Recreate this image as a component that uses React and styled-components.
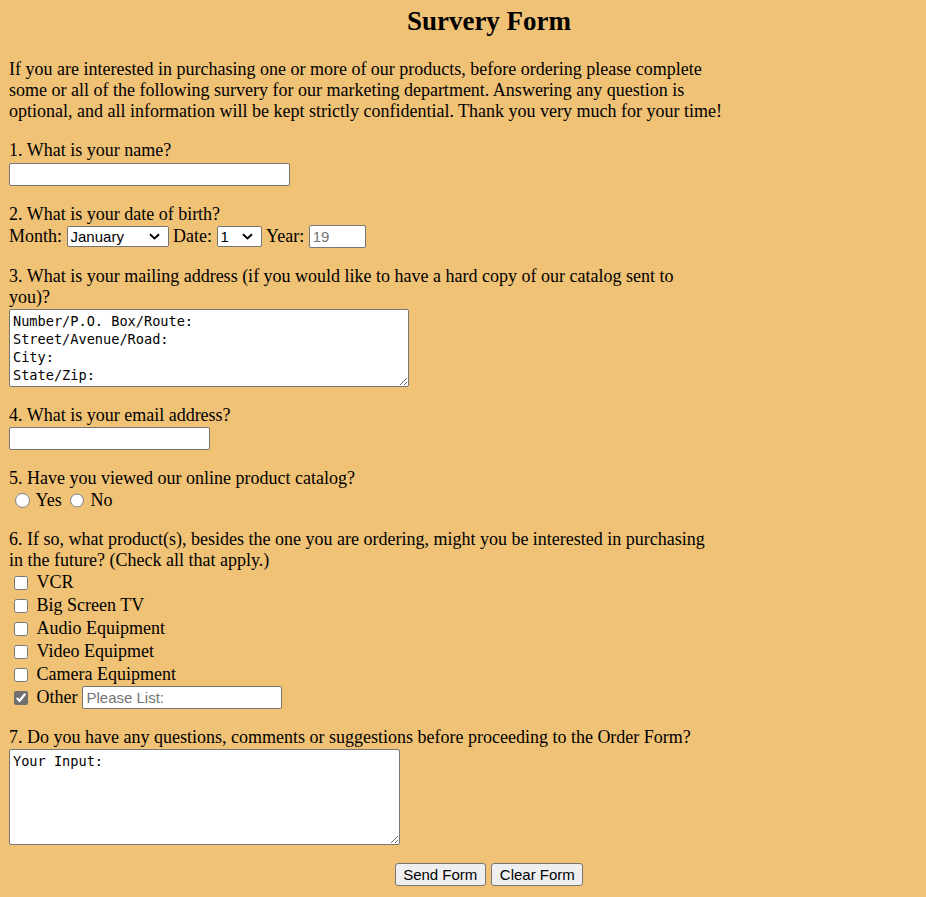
import React from 'react';
import styled, { createGlobalStyle } from 'styled-components';

const GlobalStyle = createGlobalStyle`
  html, body {
    margin: 0;
    padding: 0;
    background: #f0c276;
  }
  body {
    font-family: "Liberation Serif", "Times New Roman", serif;
    color: #000;
  }
`;

const Page = styled.form`
  padding: 6px 9px 0;
  font-size: 18px;
  line-height: normal;
`;

const Title = styled.h2`
  margin: 0 0 22px;
  padding-left: 52px;
  font-size: 27px;
  font-weight: bold;
  text-align: center;
`;

const Section = styled.div`
  max-width: 713px;
  margin: 18px 0;
`;

const Intro = styled.p`
  max-width: 713px;
  margin: 18px 0;
`;

const Label = styled.div``;

const TextField = styled.input`
  display: block;
  box-sizing: border-box;
  width: ${(p) => p.$w}px;
  height: 23px;
  margin: ${(p) => (p.$inline ? '0' : '1.5px 0 0')};
  padding: 1px 3px;
  border: 1px solid #767676;
  border-radius: 2px;
  background: #fff;
  color: #000;
  font: 15px "Liberation Sans", Arial, sans-serif;
  &::placeholder {
    color: #757575;
  }
`;

const Row = styled.div`
  display: flex;
  align-items: center;
  gap: 4.5px;
  height: 22px;
  margin-top: 1.3px;
`;

const SelectWrap = styled.span`
  position: relative;
  display: inline-flex;
`;

const Select = styled.select`
  appearance: none;
  box-sizing: border-box;
  width: ${(p) => p.$w}px;
  height: 21px;
  margin: 0;
  padding: 0 0 0 3px;
  border: 1px solid #767676;
  border-radius: 2px;
  background: #fff;
  color: #000;
  font: 15px "Liberation Sans", Arial, sans-serif;
`;

const Chevron = styled.svg`
  position: absolute;
  right: 9px;
  top: 7px;
  width: 11px;
  height: 7px;
  pointer-events: none;
`;

const Area = styled.textarea`
  display: block;
  box-sizing: border-box;
  width: ${(p) => p.$w}px;
  height: ${(p) => p.$h}px;
  margin: 1px 0 0;
  padding: 2px 3px;
  border: 1px solid #767676;
  border-radius: 2px;
  background: #fff;
  color: #000;
  font: 13.6px "DejaVu Sans Mono", monospace;
  line-height: 18px;
`;

const RadioRow = styled.div`
  display: flex;
  align-items: center;
  height: 22px;
`;

const Radio = styled.input`
  width: 14.6px;
  height: 14.6px;
  margin: 0 6px 0 6px;
`;

const ChoiceText = styled.span`
  margin-right: ${(p) => p.$mr || 0}px;
`;

const CheckRow = styled.label`
  display: flex;
  align-items: center;
  height: 23px;
`;

const Check = styled.input`
  width: 13.5px;
  height: 13.5px;
  margin: 0 9px 0 5px;
  accent-color: #6f6f6f;
`;

const ButtonRow = styled.div`
  display: flex;
  justify-content: center;
  gap: 5.5px;
  margin: 18px 0 0;
  padding-left: 52px;
`;

const Button = styled.button`
  box-sizing: border-box;
  height: 23px;
  padding: 0 7.5px;
  border: 1px solid #767676;
  border-radius: 3px;
  background: #efefef;
  color: #000;
  font: 15px "Liberation Sans", Arial, sans-serif;
`;

const months = [
  'January', 'February', 'March', 'April', 'May', 'June',
  'July', 'August', 'September', 'October', 'November', 'December',
];

const products = ['VCR', 'Big Screen TV', 'Audio Equipment', 'Video Equipmet', 'Camera Equipment'];

function Dropdown({ width, defaultValue, children }) {
  return (
    <SelectWrap>
      <Select $w={width} defaultValue={defaultValue}>
        {children}
      </Select>
      <Chevron viewBox="0 0 11 7" aria-hidden="true">
        <path d="M1 1.2 L5.5 5.5 L10 1.2" fill="none" stroke="#000" strokeWidth="1.9" />
      </Chevron>
    </SelectWrap>
  );
}

export default function App() {
  return (
    <>
      <GlobalStyle />
      <Page onSubmit={(e) => e.preventDefault()}>
        <Title>Survery Form</Title>
        <Intro>
          If you are interested in purchasing one or more of our products, before ordering please
          complete some or all of the following survery for our marketing department. Answering any
          question is optional, and all information will be kept strictly confidential. Thank you
          very much for your time!
        </Intro>

        <Section>
          <Label>1. What is your name?</Label>
          <TextField type="text" $w={281} />
        </Section>

        <Section>
          <Label>2. What is your date of birth?</Label>
          <Row>
            <span>Month:</span>
            <Dropdown width={102} defaultValue="January">
              {months.map((m) => (
                <option key={m}>{m}</option>
              ))}
            </Dropdown>
            <span>Date:</span>
            <Dropdown width={45} defaultValue="1">
              {Array.from({ length: 31 }, (_, i) => (
                <option key={i}>{i + 1}</option>
              ))}
            </Dropdown>
            <span>Year:</span>
            <TextField type="text" $w={57} $inline placeholder="19" />
          </Row>
        </Section>

        <Section>
          <Label>
            3. What is your mailing address (if you would like to have a hard copy of our catalog
            sent to
            <br />
            you)?
          </Label>
          <Area
            $w={400}
            $h={78}
            defaultValue={'Number/P.O. Box/Route:\nStreet/Avenue/Road:\nCity:\nState/Zip:'}
          />
        </Section>

        <Section>
          <Label>4. What is your email address?</Label>
          <TextField type="text" $w={201} />
        </Section>

        <Section>
          <Label>5. Have you viewed our online product catalog?</Label>
          <RadioRow>
            <Radio type="radio" name="viewed" />
            <ChoiceText $mr={2}>Yes</ChoiceText>
            <Radio type="radio" name="viewed" />
            <ChoiceText>No</ChoiceText>
          </RadioRow>
        </Section>

        <Section>
          <Label>
            6. If so, what product(s), besides the one you are ordering, might you be interested in
            purchasing in the future? (Check all that apply.)
          </Label>
          {products.map((p) => (
            <CheckRow key={p}>
              <Check type="checkbox" />
              <span>{p}</span>
            </CheckRow>
          ))}
          <CheckRow>
            <Check type="checkbox" defaultChecked />
            <ChoiceText $mr={5}>Other</ChoiceText>
            <TextField type="text" $w={200} $inline placeholder="Please List:" />
          </CheckRow>
        </Section>

        <Section>
          <Label>7. Do you have any questions, comments or suggestions before proceeding to the Order Form?</Label>
          <Area $w={391} $h={96} defaultValue="Your Input:" />
        </Section>

        <ButtonRow>
          <Button type="submit">Send Form</Button>
          <Button type="reset">Clear Form</Button>
        </ButtonRow>
      </Page>
    </>
  );
}
